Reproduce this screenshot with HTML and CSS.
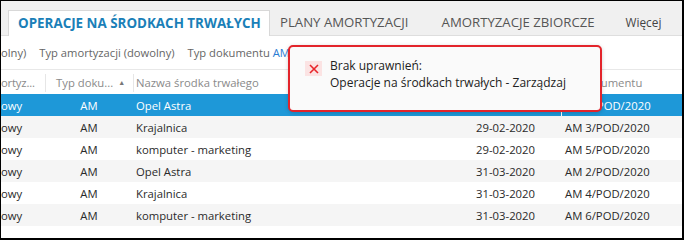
FILE: index.html
```html
<!DOCTYPE html>
<html lang="pl">
<head>
<meta charset="utf-8">
<link rel="stylesheet" href="styles.css">
</head>
<body>
<div class="frame">
  <div class="tabs">
    <div class="tab active">OPERACJE NA ŚRODKACH TRWAŁYCH</div>
    <div class="tab t2">PLANY AMORTYZACJI</div>
    <div class="tab t3">AMORTYZACJE ZBIORCZE</div>
    <div class="tab more">Więcej</div>
  </div>
  <div class="filters">
    <span class="f1">olny)</span>
    <span class="f2">Typ amortyzacji (dowolny)</span>
    <span class="f3">Typ dokumentu <span class="val">AM</span></span>
  </div>
  <div class="grid">
    <div class="row head">
      <div class="c c1">ortyz...</div>
      <div class="c c2 sep">Typ doku... <span class="arrow">▲</span></div>
      <div class="c c3 sep">Nazwa środka trwałego</div>
      <div class="c c4"></div>
      <div class="c c5">Nr dokumentu</div>
    </div>
    <div class="row sel">
      <div class="c c1">owy</div><div class="c c2">AM</div><div class="c c3">Opel Astra</div><div class="c c4">29-02-2020</div><div class="c c5">AM 1/POD/2020</div>
    </div>
    <div class="row alt">
      <div class="c c1">owy</div><div class="c c2">AM</div><div class="c c3">Krajalnica</div><div class="c c4">29-02-2020</div><div class="c c5">AM 3/POD/2020</div>
    </div>
    <div class="row">
      <div class="c c1">owy</div><div class="c c2">AM</div><div class="c c3">komputer - marketing</div><div class="c c4">29-02-2020</div><div class="c c5">AM 5/POD/2020</div>
    </div>
    <div class="row alt">
      <div class="c c1">owy</div><div class="c c2">AM</div><div class="c c3">Opel Astra</div><div class="c c4">31-03-2020</div><div class="c c5">AM 2/POD/2020</div>
    </div>
    <div class="row">
      <div class="c c1">owy</div><div class="c c2">AM</div><div class="c c3">Krajalnica</div><div class="c c4">31-03-2020</div><div class="c c5">AM 4/POD/2020</div>
    </div>
    <div class="row alt">
      <div class="c c1">owy</div><div class="c c2">AM</div><div class="c c3">komputer - marketing</div><div class="c c4">31-03-2020</div><div class="c c5">AM 6/POD/2020</div>
    </div>
  </div>
  <div class="toast">
    <div class="icon">
      <svg width="10" height="10" viewBox="0 0 10 10"><path d="M1 1 L9 9 M9 1 L1 9" stroke="#e8262b" stroke-width="1.6" fill="none"/></svg>
    </div>
    <div class="msg">
      <div>Brak uprawnień:</div>
      <div>Operacje na środkach trwałych - Zarządzaj</div>
    </div>
  </div>
</div>
</body>
</html>
```
FILE: styles.css
```css
* { box-sizing: border-box; }
html, body { margin: 0; padding: 0; }
body {
  background: #000;
  width: 684px;
  height: 240px;
  overflow: hidden;
  font-family: "Open Sans", "Noto Sans", sans-serif;
}
.frame {
  position: relative;
  margin: 1px 0 0 1px;
  width: 681px;
  height: 237px;
  background: #fff;
  overflow: hidden;
}
.tabs {
  display: flex;
  align-items: flex-end;
  height: 35px;
  background: #f0f0f0;
  border-bottom: 1px solid #dedede;
  padding-left: 7px;
}
.tab {
  height: 25px;
  line-height: 24px;
  font-size: 13.2px;
  color: #555;
  white-space: nowrap;
}
.tab.active {
  background: #fff;
  border: 1px solid #d8d8d8;
  border-bottom: none;
  margin-bottom: -1px;
  height: 26px;
  width: 262px;
  padding-left: 9px;
  color: #1a7fb8;
  font-weight: 700;
  font-size: 13.4px;
}
.tab.t2 { margin-left: 10px; }
.tab.t3 { margin-left: 33px; }
.tab.more { margin-left: 31px; font-size: 11.8px; color: #444; }
.filters {
  height: 34px;
  display: flex;
  align-items: center;
  font-size: 11.2px;
  color: #666;
  border-bottom: 1px solid #e8e8e8;
  white-space: nowrap;
}
.f2 { margin-left: 13px; }
.f3 { margin-left: 13px; }
.val { color: #2b7cd3; }
.grid { font-size: 11.3px; }
.row {
  display: grid;
  grid-template-columns: 44px 88px 327px 101px 1fr;
  height: 22px;
  align-items: center;
  color: #2a2a2a;
  white-space: nowrap;
}
.row.head { height: 24px; color: #8a8a8a; padding-top: 1px; }
.row.alt { background: #f5f5f5; }
.row.sel { background: #1e98d8; color: #fff; }
.c { height: 100%; display: flex; align-items: center; overflow: hidden; }
.c1 { padding-left: 0; }
.head .c1 { letter-spacing: -0.2px; }
.c2 { justify-content: center; }
.head .c2 { justify-content: flex-start; padding-left: 10px; }
.head .sep { border-left: 1px solid #e6e6e6; height: 18px; }
.arrow { font-size: 7px; margin-left: 5px; color: #777; }
.c3 { padding-left: 3px; }
.head .c3 { padding-left: 2px; }
.c4 { justify-content: flex-end; padding-right: 26px; }
.c5 { padding-left: 4px; }
.sel .c5 { border-left: 1px solid #fff; }
.head .c5 { padding-left: 4px; }
.toast {
  position: absolute;
  left: 287px;
  top: 44px;
  width: 314px;
  height: 67px;
  background: #fafafa;
  border: 2px solid #e3242b;
  border-radius: 5px;
  box-shadow: 0 1px 4px rgba(0,0,0,0.18);
  display: flex;
  align-items: flex-start;
  padding: 10px 0 0 15px;
}
.icon {
  width: 17px;
  height: 15px;
  margin-top: 4px;
  background: #fbe3e3;
  display: flex;
  align-items: center;
  justify-content: center;
}
.msg {
  margin-left: 8px;
  font-size: 12px;
  line-height: 17px;
  color: #222;
}
```
